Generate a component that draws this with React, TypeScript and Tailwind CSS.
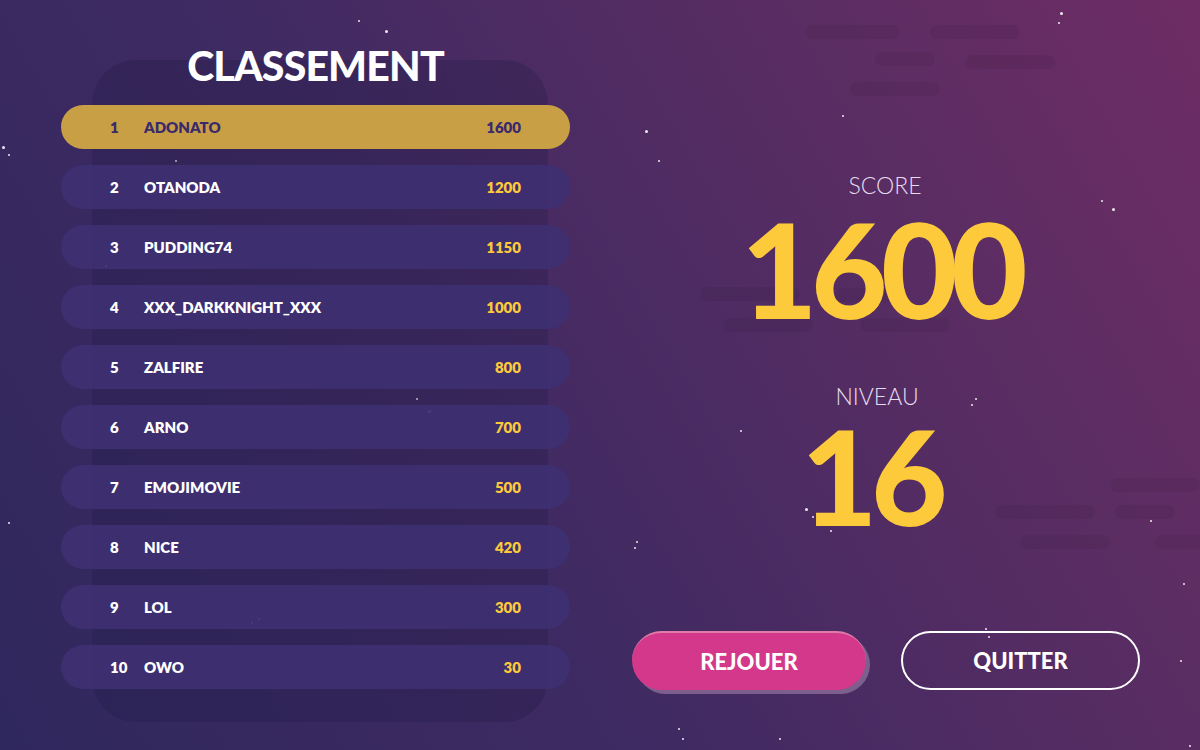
import React from 'react';

const players = [
  { rank: 1, name: 'ADONATO', score: 1600 },
  { rank: 2, name: 'OTANODA', score: 1200 },
  { rank: 3, name: 'PUDDING74', score: 1150 },
  { rank: 4, name: 'XXX_DARKKNIGHT_XXX', score: 1000 },
  { rank: 5, name: 'ZALFIRE', score: 800 },
  { rank: 6, name: 'ARNO', score: 700 },
  { rank: 7, name: 'EMOJIMOVIE', score: 500 },
  { rank: 8, name: 'NICE', score: 420 },
  { rank: 9, name: 'LOL', score: 300 },
  { rank: 10, name: 'OWO', score: 30 },
];

// little sparkles scattered over the sky
const stars: [number, number, number][] = [
  [645, 130, 3], [658, 160, 2], [1060, 12, 3], [1058, 22, 2], [1101, 200, 2], [1112, 208, 3],
  [975, 398, 2], [971, 404, 2], [805, 508, 3], [812, 516, 2], [830, 530, 2], [636, 541, 2],
  [634, 547, 2], [1183, 583, 2], [1189, 745, 2], [985, 628, 2], [988, 636, 2], [678, 728, 2],
  [682, 738, 2], [779, 738, 2], [2, 146, 3], [8, 154, 2], [258, 618, 2], [251, 622, 2],
  [105, 265, 2], [175, 160, 2], [416, 398, 2], [428, 410, 3], [8, 522, 2], [842, 115, 2],
  [1180, 660, 2], [358, 20, 2], [385, 30, 3], [1150, 520, 2], [740, 430, 2],
];

const clouds: [number, number, number][] = [
  [805, 25, 95], [930, 25, 90], [875, 52, 60], [965, 55, 90], [850, 82, 90],
  [700, 287, 100], [835, 288, 70], [723, 318, 90], [860, 318, 90],
  [1110, 478, 90], [995, 505, 100], [1115, 505, 60], [1020, 535, 90], [1155, 535, 50],
];

export default function App() {
  return (
    <div
      className="relative w-[1200px] h-[750px] overflow-hidden flex bg-[linear-gradient(60deg,#2f285e_0%,#3f2a62_40%,#5a2d63_75%,#6e2c64_100%)]"
      style={{ fontFamily: 'Lato, "Open Sans", sans-serif' }}
    >
      {clouds.map(([x, y, w], i) => (
        <div
          key={'c' + i}
          className="absolute h-[14px] rounded-full bg-black/5"
          style={{ left: x, top: y, width: w }}
        />
      ))}
      {stars.map(([x, y, s], i) => (
        <div
          key={'s' + i}
          className="absolute rounded-full bg-white/90"
          style={{ left: x, top: y, width: s, height: s }}
        />
      ))}

      {/* Leaderboard */}
      <div className="relative w-[630px] flex flex-col pl-[61px] pt-[42px]">
        <div className="absolute left-[92px] top-[60px] w-[456px] h-[662px] rounded-[44px] bg-[#1c1640]/25" />
        <h1 className="relative w-[509px] text-center text-white font-black text-[41px] leading-[48px] tracking-[-0.02em]">
          CLASSEMENT
        </h1>
        <div className="relative mt-[15px] flex flex-col gap-[16px] w-[509px]">
          {players.map((p) => {
            const first = p.rank === 1;
            return (
              <div
                key={p.rank}
                className={
                  'h-[44px] rounded-full flex items-center pl-[49px] pr-[49px] text-[15px] font-extrabold ' +
                  (first ? 'bg-[#c99f45] text-[#3a2a6c]' : 'bg-[#3e3072]/90 text-white')
                }
              >
                <span className="w-[34px]">{p.rank}</span>
                <span className="flex-1">{p.name}</span>
                <span className={first ? '' : 'text-[#fcc93b]'}>{p.score}</span>
              </div>
            );
          })}
        </div>
      </div>

      {/* Score panel */}
      <div className="relative w-[510px] flex flex-col items-center">
        <div className="mt-[173px] text-[23px] leading-[24px] font-light text-[#e6dcef]">SCORE</div>
        <div className="mt-[21px] h-[100px] text-[132px] leading-[100px] font-black text-[#fdca3b] tracking-[-0.05em] -ml-[8px]">1600</div>
        <div className="mt-[66px] text-[23px] leading-[24px] font-light text-[#e6dcef] -ml-[16px]">NIVEAU</div>
        <div className="mt-[17px] h-[100px] text-[132px] leading-[100px] font-black text-[#fdca3b] tracking-[-0.05em] -ml-[28px]">16</div>
        <div className="mt-[106px] w-full flex justify-between pl-[2px]">
          <button className="w-[234px] h-[59px] rounded-full bg-[#d4388a] text-white font-black text-[22px] shadow-[4px_4px_0_0_#7d5f8e] border-t-2 border-[#e07aa9]">
            REJOUER
          </button>
          <button className="w-[239px] h-[59px] rounded-full border-2 border-white text-white font-black text-[22px]">
            QUITTER
          </button>
        </div>
      </div>
    </div>
  );
}
